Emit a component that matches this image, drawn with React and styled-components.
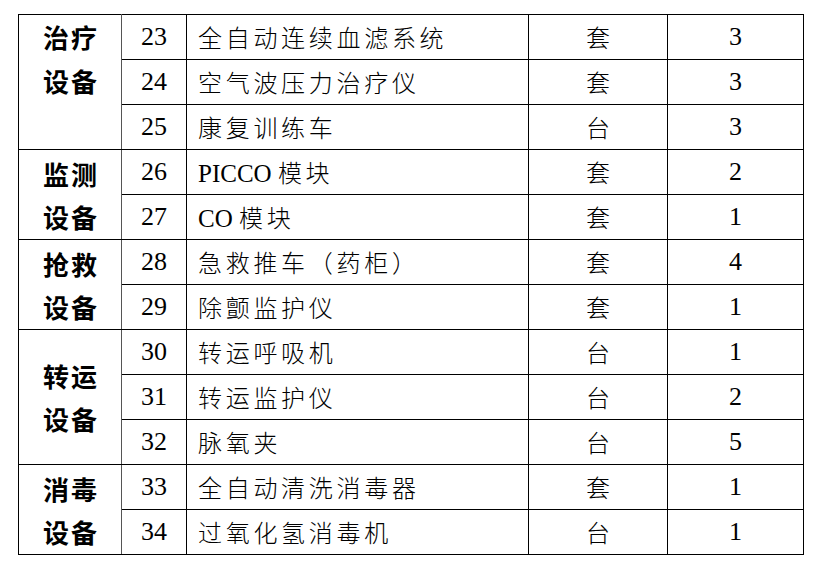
import React from "react";
import styled, { createGlobalStyle } from "styled-components";

const Global = createGlobalStyle`
  html, body { margin: 0; padding: 0; background: #fff; }
  body { font-family: "Liberation Serif", "Noto Sans CJK SC", serif; color: #000; }
`;

const Page = styled.div`
  padding: 14px 0 0 18px;
`;

const Table = styled.table`
  border-collapse: collapse;
  table-layout: fixed;
  width: 785px;
  border-left: 1.5px solid #666;
  border-bottom: 1.5px solid #777;
`;

const Row = styled.tr`
  height: 45px;
`;

const Cell = styled.td`
  border: 1px solid #000;
  padding: 0;
  vertical-align: middle;
  white-space: nowrap;
`;

const CategoryCell = styled(Cell)`
  border-right: 1.5px solid #555;
  text-align: center;
  vertical-align: ${(p) => (p.$top ? "top" : "middle")};
  font-family: "Noto Sans CJK SC", sans-serif;
  font-weight: 700;
  font-size: 26px;
  letter-spacing: 2px;
  padding-left: 2px;
  line-height: ${(p) => (p.$top ? "44px" : "43px")};
`;

const NumCell = styled(Cell)`
  text-align: center;
  font-family: "Liberation Serif", serif;
  font-size: 26px;
  padding-bottom: 1px;
`;

const NameCell = styled(Cell)`
  text-align: left;
  padding-left: 11px;
  padding-bottom: 2px;
  font-family: "Liberation Serif", "Noto Sans CJK SC", serif;
  font-weight: 300;
  font-size: 24px;
`;

const Cjk = styled.span`
  font-family: "Noto Sans CJK SC", sans-serif;
  font-weight: 300;
  letter-spacing: 3.7px;
`;

const Latin = styled.span`
  font-family: "Liberation Serif", serif;
  font-weight: 400;
  font-size: 25px;
  letter-spacing: 0;
`;

const UnitCell = styled(Cell)`
  text-align: center;
  font-family: "Noto Sans CJK SC", sans-serif;
  font-weight: 300;
  font-size: 24px;
  padding-bottom: 2px;
`;

const groups = [
  {
    name: ["治疗", "设备"],
    top: true,
    items: [
      [23, "全自动连续血滤系统", "套", 3],
      [24, "空气波压力治疗仪", "套", 3],
      [25, "康复训练车", "台", 3],
    ],
  },
  {
    name: ["监测", "设备"],
    items: [
      [26, "PICCO 模块", "套", 2],
      [27, "CO 模块", "套", 1],
    ],
  },
  {
    name: ["抢救", "设备"],
    items: [
      [28, "急救推车（药柜）", "套", 4],
      [29, "除颤监护仪", "套", 1],
    ],
  },
  {
    name: ["转运", "设备"],
    items: [
      [30, "转运呼吸机", "台", 1],
      [31, "转运监护仪", "台", 2],
      [32, "脉氧夹", "台", 5],
    ],
  },
  {
    name: ["消毒", "设备"],
    items: [
      [33, "全自动清洗消毒器", "套", 1],
      [34, "过氧化氢消毒机", "台", 1],
    ],
  },
];

function renderName(text) {
  const parts = text.split(/([A-Za-z]+\s?)/).filter(Boolean);
  return parts.map((p, i) =>
    /[A-Za-z]/.test(p) ? <Latin key={i}>{p}</Latin> : <Cjk key={i}>{p}</Cjk>
  );
}

export default function App() {
  return (
    <Page>
      <Global />
      <Table>
        <colgroup>
          <col style={{ width: 103 }} />
          <col style={{ width: 65 }} />
          <col style={{ width: 342 }} />
          <col style={{ width: 139 }} />
          <col style={{ width: 136 }} />
        </colgroup>
        <tbody>
          {groups.map((g) =>
            g.items.map((it, i) => (
              <Row key={it[0]}>
                {i === 0 && (
                  <CategoryCell rowSpan={g.items.length} $top={g.top}>
                    {g.name[0]}
                    <br />
                    {g.name[1]}
                  </CategoryCell>
                )}
                <NumCell>{it[0]}</NumCell>
                <NameCell>{renderName(it[1])}</NameCell>
                <UnitCell>{it[2]}</UnitCell>
                <NumCell>{it[3]}</NumCell>
              </Row>
            ))
          )}
        </tbody>
      </Table>
    </Page>
  );
}
